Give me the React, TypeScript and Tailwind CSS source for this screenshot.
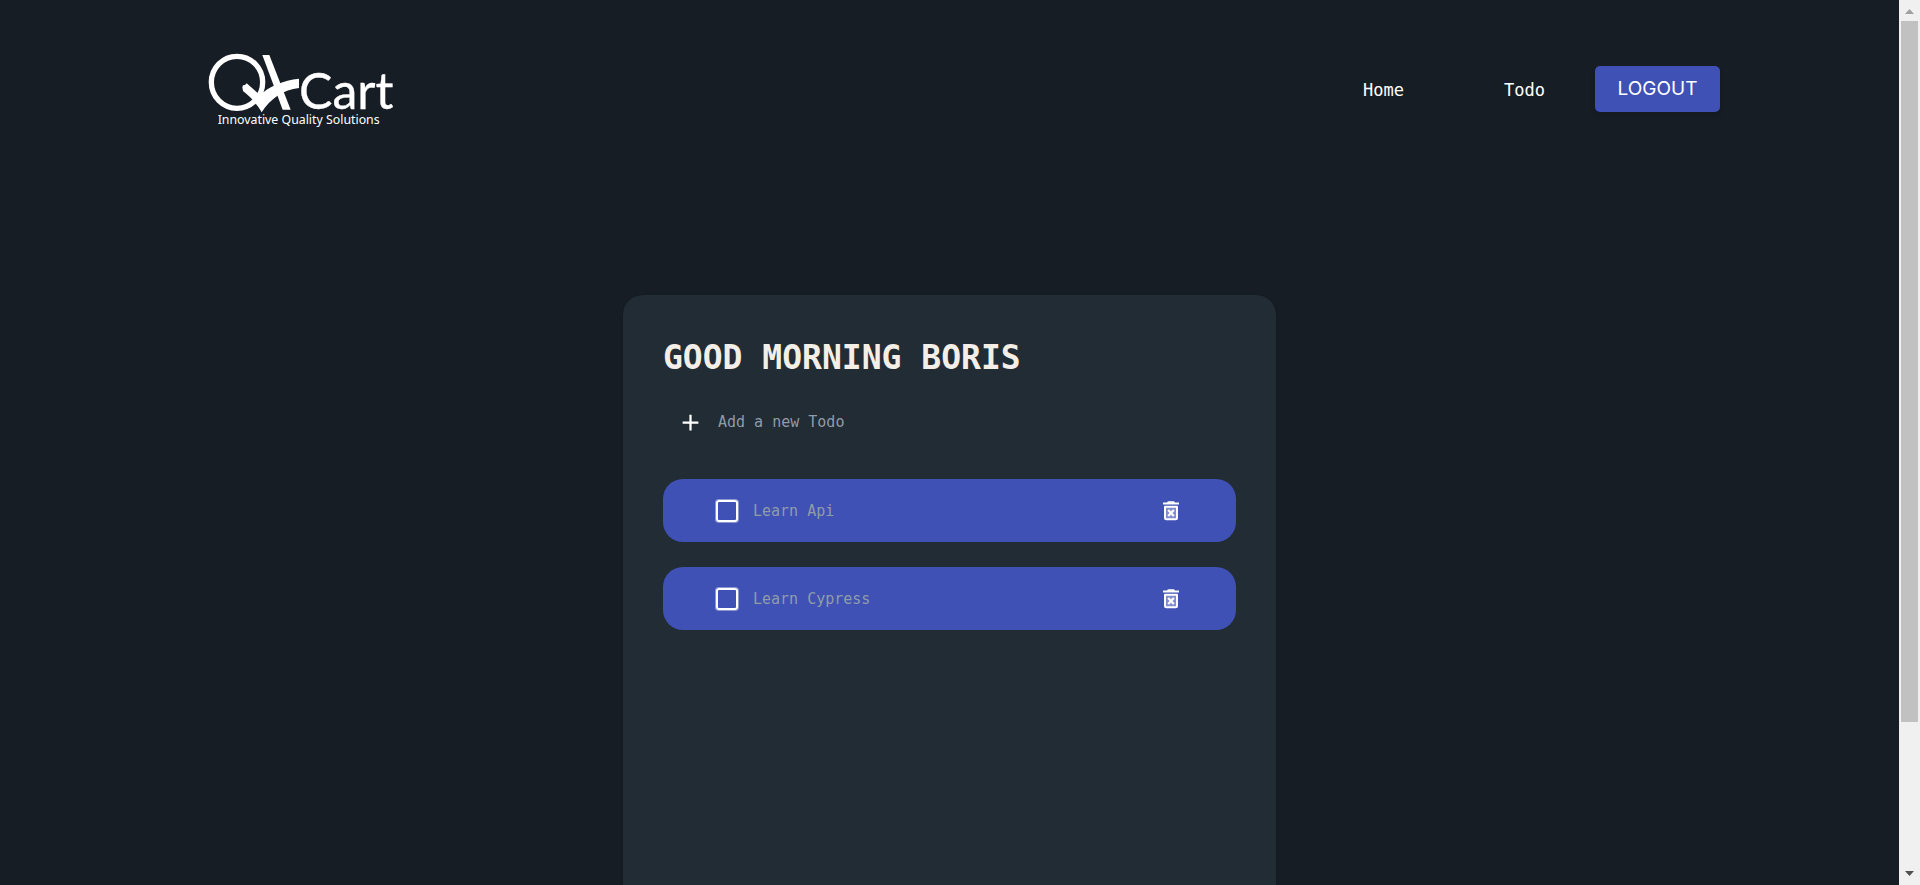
const todos = ["Learn Api", "Learn Cypress"];

function Logo() {
  return (
    <svg viewBox="0 -3 600 270" className="h-[90px] w-[200px]" role="img" aria-label="QA Cart">
      <ellipse cx="111" cy="112" rx="77" ry="78" fill="none" stroke="#fff" strokeWidth="16" />
      <path d="M187 30 H208 L272 194 H248 Z" fill="#fff" />
      <path d="M127 127 L129 121 L135 120 L140 115 L180 150 C205 126 250 105 297 101 V129 C250 134 212 160 185 202 C172 178 152 156 129 138 Z" fill="#fff" />
      <text x="297" y="193" fontSize="150" fill="#fff" stroke="#fff" strokeWidth="1" fontFamily="Lato, sans-serif">Cart</text>
      <text x="53" y="236" fontSize="37" fill="#fff" fontFamily="'Noto Sans', sans-serif">Innovative Quality Solutions</text>
    </svg>
  );
}

function TrashIcon() {
  return (
    <svg viewBox="0 0 20 22" className="h-[22px] w-5" aria-hidden="true">
      <path d="M2 4.500 V2.500 H6 L7 1.200 H13 L14 2.500 H18 V4.500 Z" fill="#fff" />
      <path
        d="M4 6.800 H16 V18 Q16 19.200 14.800 19.200 H5.200 Q4 19.200 4 18 Z"
        fill="#fff"
        fillOpacity="0.350"
        stroke="#fff"
        strokeWidth="2"
        strokeLinejoin="round"
      />
      <path d="M7.200 10 L12.800 16 M12.800 10 L7.200 16" stroke="#fff" strokeWidth="2.200" />
    </svg>
  );
}

function Header() {
  return (
    <header className="flex items-center justify-between pt-11 pr-[179px] pl-[200px]">
      <a href="#home">
        <Logo />
      </a>
      <nav className="flex items-center text-[17px] text-white">
        <a href="#home" className="mr-[100px] pt-1">Home</a>
        <a href="#todo" className="mr-[50px] pt-1">Todo</a>
        <button
          type="button"
          className="h-[46px] w-[125px] rounded-[5px] bg-[#3f51b5] font-['Inter',sans-serif] text-[19px] shadow-md"
        >
          LOGOUT
        </button>
      </nav>
    </header>
  );
}

function TodoRow({ title }: { title: string }) {
  return (
    <li className="flex h-[63px] items-center rounded-[20px] bg-[#3f51b5] pr-[55px] pl-[53px]">
      <label className="flex grow items-center gap-[15px] text-[15px] text-[#909da6]">
        <input
          type="checkbox"
          className="size-[22px] appearance-none rounded-[3px] border-2 border-white ring-1 ring-white/40"
        />
        <span className="pt-px">{title}</span>
      </label>
      <button type="button" aria-label={`Delete ${title}`}>
        <TrashIcon />
      </button>
    </li>
  );
}

function Scrollbar() {
  return (
    <div aria-hidden="true" className="flex w-[21px] shrink-0 flex-col items-center bg-[#f0f0f0]">
      <svg viewBox="0 0 21 21" className="h-[21px] w-[21px] shrink-0">
        <path d="M6 14 L10.500 9 L15 14 Z" fill="#a0a0a0" />
      </svg>
      <div className="w-[17px] grow-[701] bg-[#c1c1c1]" />
      <div className="grow-[142]" />
      <svg viewBox="0 0 21 21" className="h-[21px] w-[21px] shrink-0">
        <path d="M6 7 L10.500 12 L15 7 Z" fill="#505050" />
      </svg>
    </div>
  );
}

export default function App() {
  return (
    <div className="flex h-screen overflow-hidden bg-[#171d24] font-['DejaVu_Sans_Mono',monospace]">
      <div className="flex min-w-0 grow flex-col">
        <Header />
        <main className="mx-auto mt-[161px] w-full max-w-[653px] grow rounded-t-[20px] bg-[#222c35] px-10 pt-[41px] shadow-sm">
          <h1 className="text-[33px] leading-[44px] font-bold text-[#f3efe6]">GOOD MORNING BORIS</h1>
          <div className="mt-[22px] flex h-10 items-center gap-[14px] pl-[14px]">
            <button type="button" aria-label="Add todo" className="text-white">
              <svg viewBox="0 0 24 24" className="size-[27px]" fill="currentColor">
                <path d="M19 13h-6v6h-2v-6H5v-2h6V5h2v6h6v2z" />
              </svg>
            </button>
            <input
              type="text"
              aria-label="New todo"
              placeholder="Add a new Todo"
              className="grow bg-transparent text-[15px] text-white outline-none placeholder:text-[#8f9ba8]"
            />
          </div>
          <ul className="mt-[37px] flex flex-col gap-[25px]">
            {todos.map((title) => (
              <TodoRow key={title} title={title} />
            ))}
          </ul>
        </main>
      </div>
      <Scrollbar />
    </div>
  );
}
